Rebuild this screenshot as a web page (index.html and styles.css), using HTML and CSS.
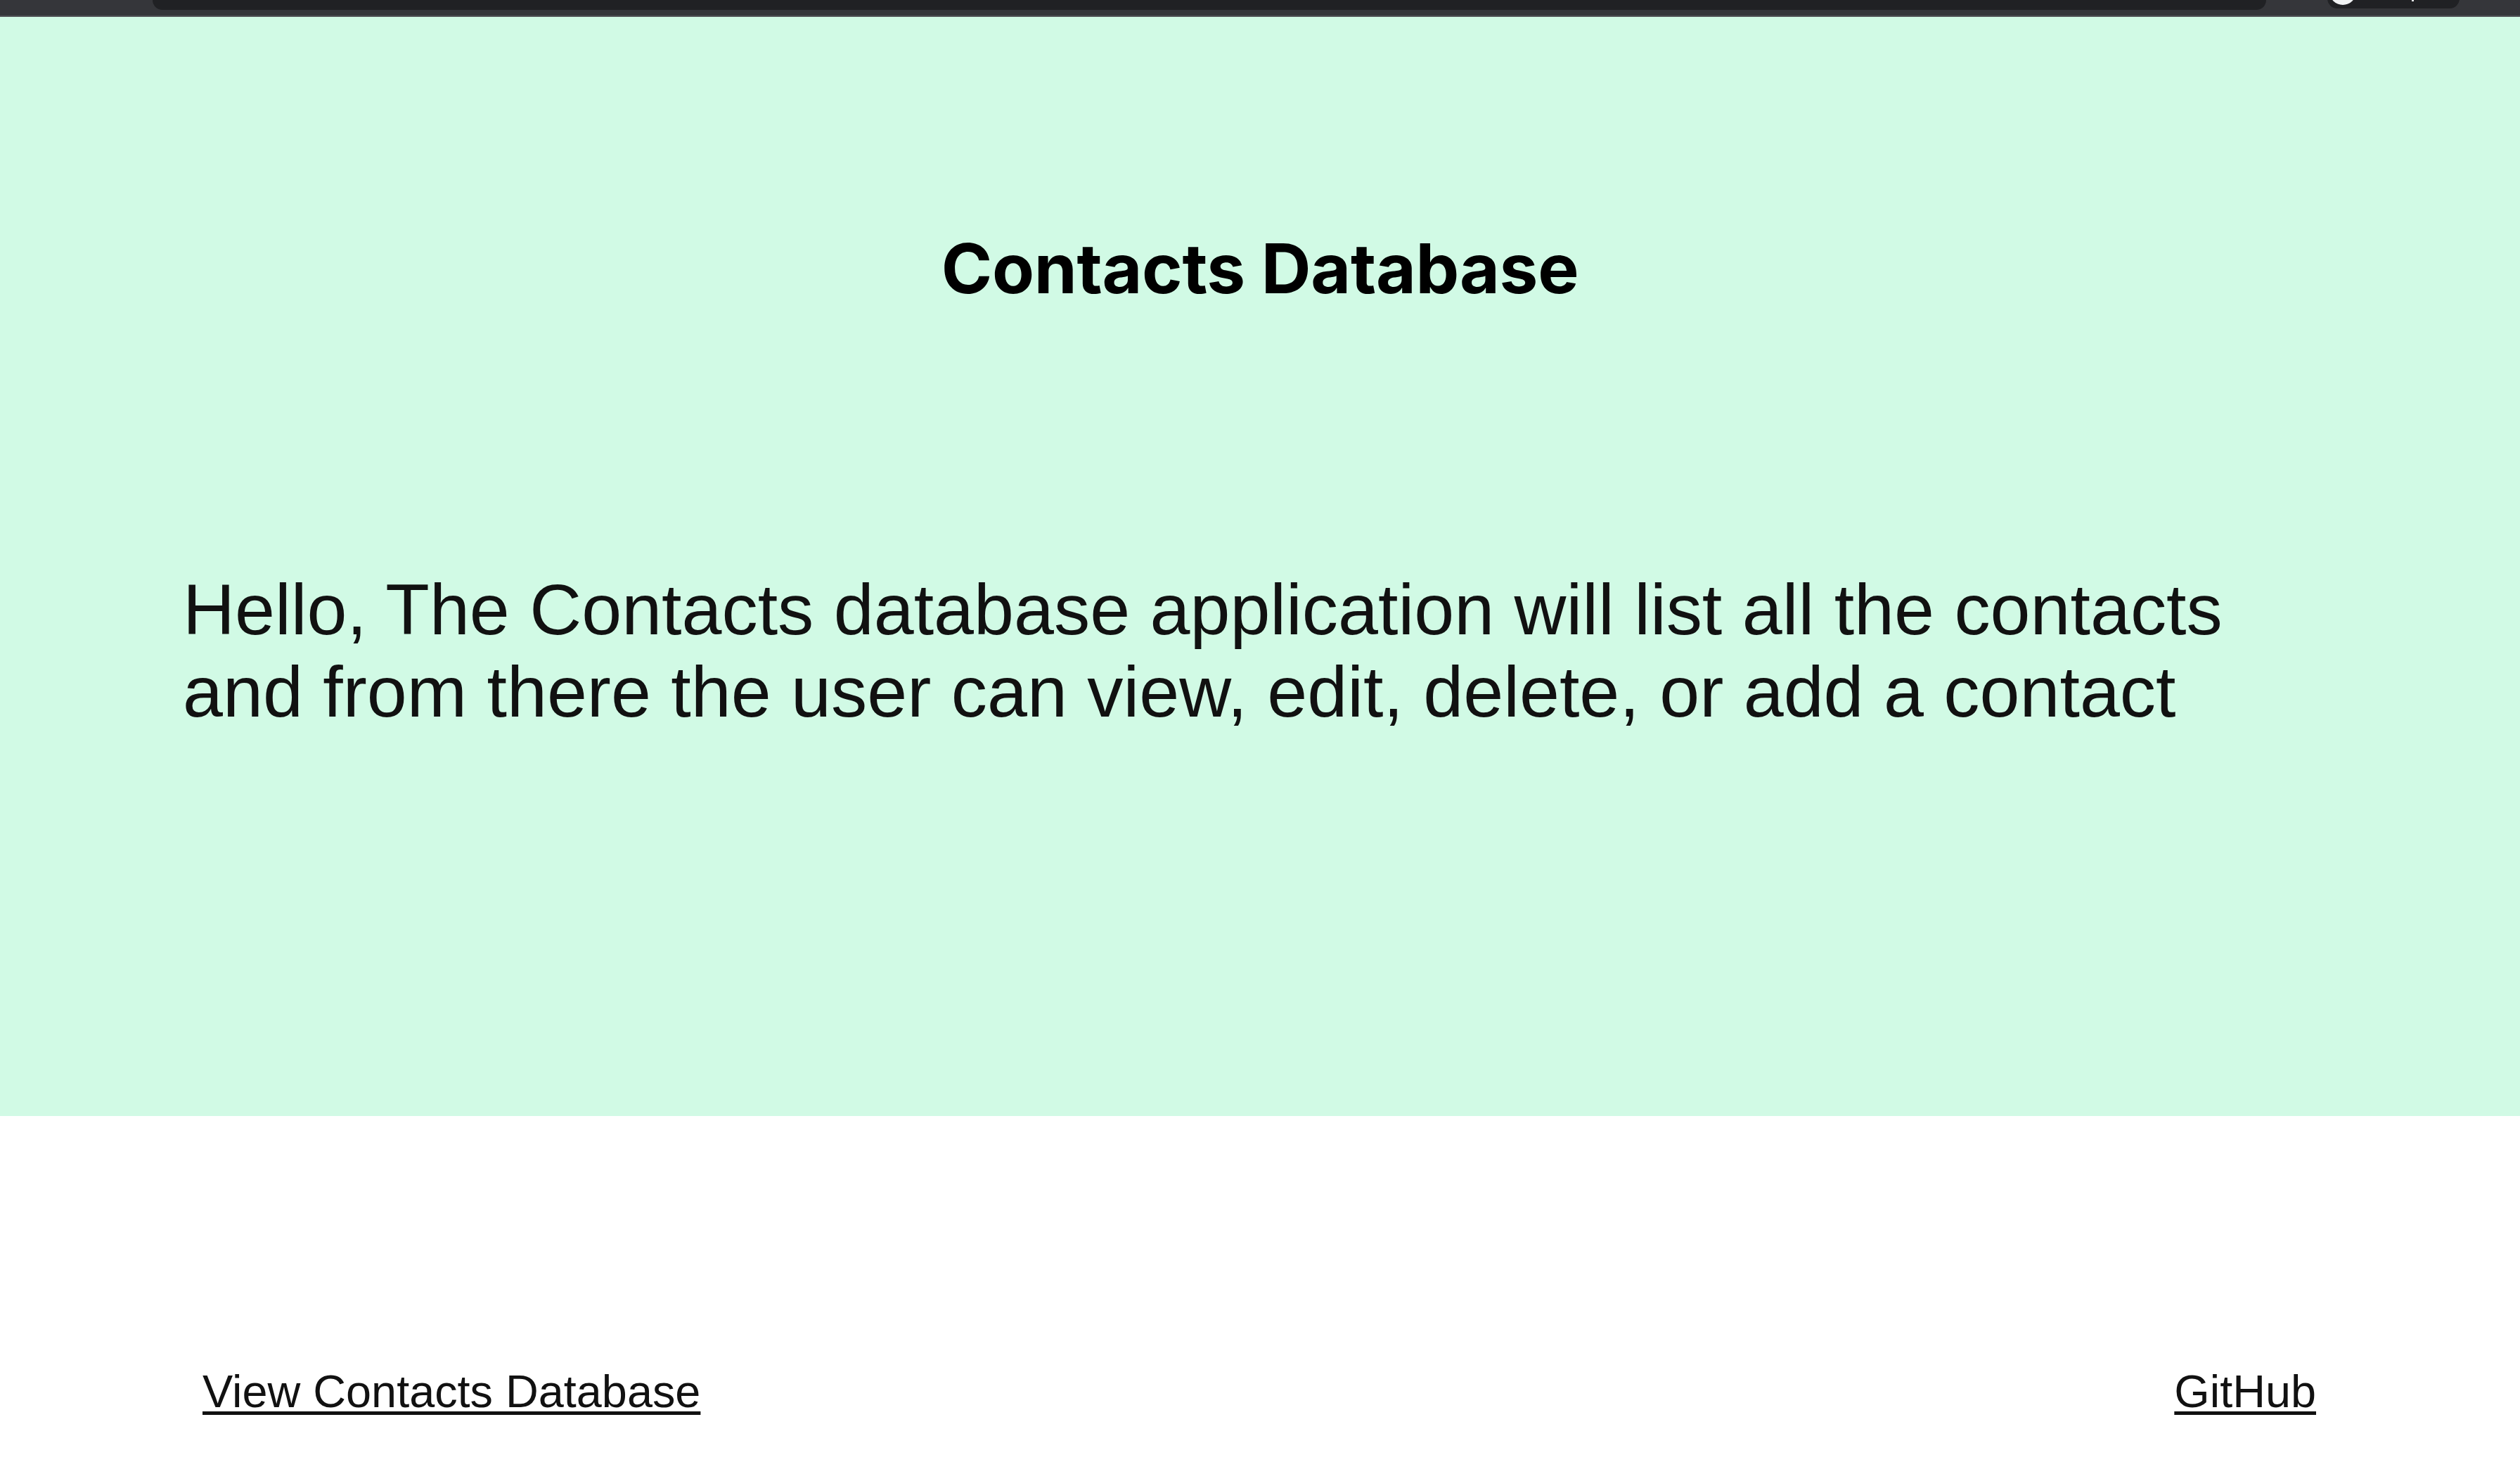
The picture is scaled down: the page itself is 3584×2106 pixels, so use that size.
FILE: index.html
```html
<!DOCTYPE html>
<html lang="en">
<head>
<meta charset="utf-8">
<title>Contacts Database</title>
<link rel="stylesheet" href="styles.css">
</head>
<body>
<div class="chrome">
  <div class="omnibox"></div>
  <div class="profile"><span class="avatar"></span><span class="dot"></span></div>
</div>
<main class="hero">
  <h1 class="title">Contacts Database</h1>
  <p class="intro">Hello, The Contacts database application will list all the contacts and from there the user can view, edit, delete, or add a contact</p>
</main>
<footer class="links">
  <a class="link" href="#">View Contacts Database</a>
  <a class="link" href="#">GitHub</a>
</footer>
</body>
</html>
```
FILE: styles.css
```css
html, body {
  margin: 0;
  padding: 0;
  background: #ffffff;
}
body {
  width: 3584px;
  height: 2106px;
  overflow: hidden;
  font-family: "Liberation Sans", Arial, sans-serif;
  color: #111111;
}
.chrome {
  height: 22px;
  background: #35363a;
  border-bottom: 2px solid #505155;
  display: flex;
  align-items: flex-end;
  overflow: hidden;
}
.omnibox {
  margin-left: 217px;
  width: 3006px;
  height: 40px;
  margin-bottom: 8px;
  background: #202124;
  border-radius: 0 0 14px 14px;
  flex: none;
}
.profile {
  margin-left: 87px;
  width: 188px;
  height: 40px;
  margin-bottom: 10px;
  background: #202124;
  border-radius: 0 0 14px 14px;
  flex: none;
  display: flex;
  align-items: flex-end;
  position: relative;
}
.avatar {
  width: 38px;
  height: 38px;
  border-radius: 50%;
  background: #f1f3f4;
  margin-left: 3px;
  margin-bottom: 5px;
}
.dot {
  position: absolute;
  left: 120px;
  bottom: 10px;
  width: 3px;
  height: 3px;
  background: #e8eaed;
}
.hero {
  background: #d1fae5;
  padding: 309px 260px 545px;
  display: flex;
  flex-direction: column;
}
.title {
  margin: 0;
  font-family: Inter, "Noto Sans", sans-serif;
  font-weight: 700;
  font-size: 98px;
  line-height: 1;
  letter-spacing: -0.3px;
  text-align: center;
  color: #000000;
}
.intro {
  margin: 377px 0 0;
  font-size: 102.4px;
  line-height: 117px;
  color: #111111;
}
.links {
  display: flex;
  justify-content: space-between;
  padding: 354px 290px 0 288px;
}
.link {
  font-size: 64.8px;
  line-height: normal;
  color: #111111;
  text-decoration: underline;
  text-decoration-thickness: 5px;
  text-underline-offset: 6px;
}
```
